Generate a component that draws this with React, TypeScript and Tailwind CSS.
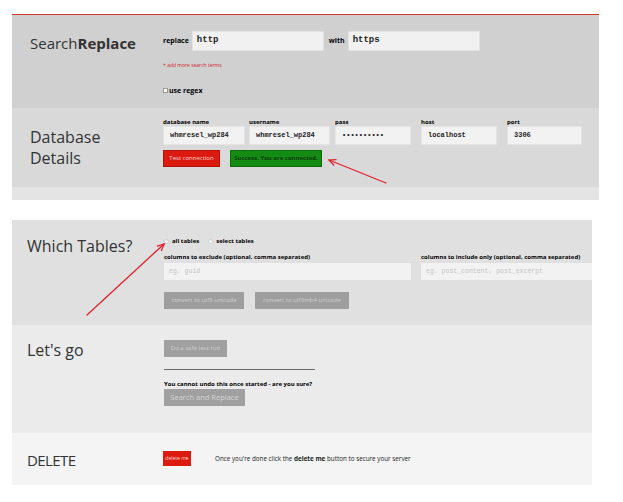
import React from "react";

const sans = { fontFamily: '"Open Sans", "Noto Sans", sans-serif' };
const mono = { fontFamily: '"Liberation Mono", "DejaVu Sans Mono", monospace' };

function Field({ label, value, width, pass }: { label: string; value: string; width: string; pass?: boolean }) {
    return (
        <div className="w-[86px] shrink-0">
            <div className="text-[6px] leading-[8px] font-bold text-black">{label}</div>
            <div
                className={`${width} h-[19px] bg-[#f2f2f2] border border-[#e4e4e4] flex items-center pl-[6px] text-[7px] font-bold text-[#222]`}
                style={mono}
            >
                {pass ? "••••••••••" : value}
            </div>
        </div>
    );
}

function Arrow({ x1, y1, x2, y2 }: { x1: number; y1: number; x2: number; y2: number }) {
    // arrow head at (x2, y2)
    const a = Math.atan2(y2 - y1, x2 - x1);
    const l = 7;
    const p1 = [x2 - l * Math.cos(a - 0.45), y2 - l * Math.sin(a - 0.45)];
    const p2 = [x2 - l * Math.cos(a + 0.45), y2 - l * Math.sin(a + 0.45)];
    return (
        <g stroke="#e0212b" strokeWidth="1.3" fill="none" strokeLinecap="round">
            <line x1={x1} y1={y1} x2={x2} y2={y2} />
            <polyline points={`${p1[0]},${p1[1]} ${x2},${y2} ${p2[0]},${p2[1]}`} />
        </g>
    );
}

export default function App() {
    return (
        <div className="relative w-[623px] h-[502px] bg-white overflow-hidden" style={sans}>
            {/* top panel */}
            <div className="ml-[12px] mt-[14px] w-[587px] border-t border-[#d8352d]">
                <div className="h-[93px] bg-[#d0d0d0] flex">
                    <div className="w-[151px] shrink-0 pl-[18px] pt-[18px] text-[15px] leading-[20px] text-[#333]">
                        Search<span className="font-bold">Replace</span>
                    </div>
                    <div className="pt-[16px]">
                        <div className="flex items-center">
                            <span className="text-[7px] font-bold text-black mr-[3px]">replace</span>
                            <div className="w-[132px] h-[20px] bg-[#f1f1f1] border border-[#e2e2e2] flex items-center pl-[4px] text-[9px] font-bold text-[#222]" style={mono}>
                                http
                            </div>
                            <span className="text-[7px] font-bold text-black ml-[5px] mr-[3px]">with</span>
                            <div className="w-[132px] h-[20px] bg-[#f1f1f1] border border-[#e2e2e2] flex items-center pl-[4px] text-[9px] font-bold text-[#222]" style={mono}>
                                https
                            </div>
                        </div>
                        <div className="mt-[11px] text-[5px] leading-[6px] text-[#d2232a]">+ add more search terms</div>
                        <div className="mt-[18px] flex items-center gap-[1px]">
                            <span className="w-[5px] h-[5px] bg-white border border-[#999]" />
                            <span className="text-[7px] leading-[9px] font-bold text-black">use regex</span>
                        </div>
                    </div>
                </div>
                <div className="h-[79px] bg-[#d9d9d9] flex">
                    <div className="w-[151px] shrink-0 pl-[18px] pt-[19px] text-[16px] leading-[21px] text-[#333]">
                        Database
                        <br />
                        Details
                    </div>
                    <div className="pt-[10px]">
                        <div className="flex">
                            <Field label="database name" value="whmresel_wp284" width="w-[82px]" />
                            <Field label="username" value="whmresel_wp284" width="w-[81px]" />
                            <Field label="pass" value="" width="w-[76px]" pass />
                            <Field label="host" value="localhost" width="w-[76px]" />
                            <Field label="port" value="3306" width="w-[75px]" />
                        </div>
                        <div className="mt-[5px] flex gap-[10px]">
                            <div className="w-[57px] h-[17px] bg-[#dc1a0f] border border-[#b01208] flex items-center justify-center text-[6px] text-[#ffd9d4]">
                                Test connection
                            </div>
                            <div className="w-[92px] h-[17px] bg-[#148c14] border border-[#0d6a0d] flex items-center justify-center text-[6px] font-bold text-[#0a3d0a]">
                                Success. You are connected.
                            </div>
                        </div>
                    </div>
                </div>
                <div className="h-[13px] bg-[#e4e4e4]" />
            </div>

            {/* lower panel */}
            <div className="ml-[12px] mt-[20px] w-[580px] overflow-hidden">
                <div className="h-[105px] bg-[#e0e0e0] flex">
                    <div className="w-[152px] shrink-0 pl-[15px] pt-[16px] text-[16px] leading-[20px] text-[#333]">
                        Which Tables?
                    </div>
                    <div className="pt-[17px] shrink-0">
                        <div className="flex items-center text-[6px] leading-[8px] font-bold text-black">
                            <span className="w-[5px] h-[5px] rounded-full bg-[#f4f4f4] border border-[#ccc] mr-[3px]" />
                            <span>all tables</span>
                            <span className="w-[5px] h-[5px] rounded-full bg-white border border-[#ccc] ml-[9px] mr-[3px]" />
                            <span>select tables</span>
                        </div>
                        <div className="flex gap-[10px] mt-[8px]">
                            <div className="w-[247px]">
                                <div className="text-[6px] leading-[8px] font-bold text-black whitespace-nowrap">
                                    columns to exclude (optional, comma separated)
                                </div>
                                <div className="mt-[2px] h-[17px] bg-[#f2f2f2] flex items-center pl-[5px] text-[6.5px] text-[#c4c4c4]" style={mono}>
                                    eg. guid
                                </div>
                            </div>
                            <div className="w-[200px]">
                                <div className="text-[6px] leading-[8px] font-bold text-black whitespace-nowrap">
                                    columns to include only (optional, comma separated)
                                </div>
                                <div className="mt-[2px] h-[17px] bg-[#f2f2f2] flex items-center pl-[5px] text-[6.5px] text-[#c4c4c4]" style={mono}>
                                    eg. post_content, post_excerpt
                                </div>
                            </div>
                        </div>
                        <div className="mt-[12px] flex gap-[11px]">
                            <div className="w-[80px] h-[17px] bg-[#9e9e9e] flex items-center justify-center text-[6px] text-[#cfcfcf]">
                                convert to utf8 unicode
                            </div>
                            <div className="w-[94px] h-[17px] bg-[#9e9e9e] flex items-center justify-center text-[6px] text-[#cfcfcf]">
                                convert to utf8mb4 unicode
                            </div>
                        </div>
                    </div>
                </div>

                <div className="h-[108px] bg-[#ebebeb] flex">
                    <div className="w-[152px] shrink-0 pl-[15px] pt-[15px] text-[16px] leading-[20px] text-[#333]">
                        Let's go
                    </div>
                    <div className="pt-[15px]">
                        <div className="w-[63px] h-[17px] bg-[#a0a0a0] flex items-center justify-center text-[6px] text-[#d0d0d0]">
                            Do a safe test run
                        </div>
                        <div className="mt-[12px] w-[151px] border-t border-[#6b6b6b]" />
                        <div className="mt-[10px] text-[6px] leading-[8px] font-bold text-black whitespace-nowrap">
                            You cannot undo this once started - are you sure?
                        </div>
                        <div className="mt-[1px] w-[81px] h-[17px] bg-[#a0a0a0] flex items-center justify-center text-[7.5px] text-[#d4d4d4]">
                            Search and Replace
                        </div>
                    </div>
                </div>

                <div className="h-[52px] bg-[#f4f4f4] flex">
                    <div className="w-[151px] shrink-0 pl-[15px] pt-[17px] text-[15px] leading-[20px] tracking-[-0.6px] text-[#333]">
                        DELETE
                    </div>
                    <div className="pt-[18px] flex items-start">
                        <div className="w-[28px] h-[15px] bg-[#dc1a0f] flex items-center justify-center text-[5px] text-[#ffd9d4]">
                            delete me
                        </div>
                        <div className="ml-[24px] h-[15px] flex items-center text-[6.3px] text-[#222] whitespace-nowrap">
                            Once you're done click the&nbsp;<span className="font-bold">delete me</span>&nbsp;button to secure your server
                        </div>
                    </div>
                </div>
            </div>

            <svg className="absolute inset-0 pointer-events-none" width="623" height="502">
                <Arrow x1={386} y1={183} x2={329} y2={160} />
                <Arrow x1={87} y1={315} x2={164} y2={244} />
            </svg>
        </div>
    );
}
